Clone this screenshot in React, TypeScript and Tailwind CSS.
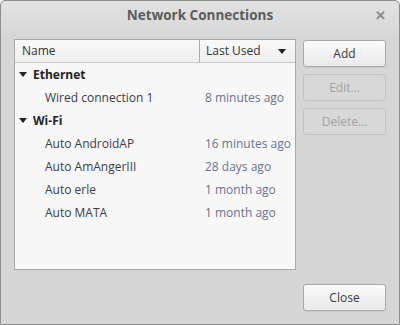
import React from "react";

const rows = [
  { group: "Ethernet", items: [{ name: "Wired connection 1", used: "8 minutes ago" }] },
  {
    group: "Wi-Fi",
    items: [
      { name: "Auto AndroidAP", used: "16 minutes ago" },
      { name: "Auto AmAngerIII", used: "28 days ago" },
      { name: "Auto erle", used: "1 month ago" },
      { name: "Auto MATA", used: "1 month ago" },
    ],
  },
];

const Arrow = () => (
  <svg width="8" height="5" viewBox="0 0 8 5" className="shrink-0">
    <path d="M0 0 H8 L4 5 Z" fill="#222" />
  </svg>
);

const Button = ({ label, disabled }: { label: string; disabled?: boolean }) => (
  <div
    className={
      disabled
        ? "w-[83px] h-[27px] rounded-[3px] border border-[#c2c2c2] bg-[#d8d8d8] text-[#a3a3a3] flex items-center justify-center"
        : "w-[83px] h-[27px] rounded-[3px] border border-[#a8a8a8] bg-gradient-to-b from-[#fbfbfb] to-[#e9e9e9] text-[#3a3a3a] flex items-center justify-center shadow-[0_1px_0_rgba(0,0,0,0.06)]"
    }
  >
    {label}
  </div>
);

export default function App() {
  return (
    <div
      className="w-[400px] h-[325px] border border-[#8d8d8d] rounded-t-[5px] bg-[#d6d6d6] flex flex-col text-[12px]"
      style={{ fontFamily: '"Open Sans", "Noto Sans", sans-serif' }}
    >
      <div className="h-[38px] shrink-0 flex items-start pt-[5px] px-[13px] rounded-t-[5px] bg-gradient-to-b from-[#e2e2e2] to-[#d6d6d6]">
        <div className="w-[14px]" />
        <div className="flex-1 text-center font-bold text-[13.5px] leading-[18px] text-[#5b5b5b]">Network Connections</div>
        <div className="w-[14px] text-[#8a8a8a] font-bold text-[13px] leading-[18px] text-right">✕</div>
      </div>

      <div className="flex px-[13px] gap-[7px] shrink-0">
        <div className="w-[282px] h-[231px] border border-[#a9a9a9] bg-[#f7f7f7] flex flex-col">
          <div className="h-[23px] shrink-0 flex border-b border-[#c6c6c6] bg-gradient-to-b from-[#f8f8f8] to-[#efefef] text-[#333]">
            <div className="w-[185px] border-r border-[#a9a9a9] flex items-center pl-[7px]">Name</div>
            <div className="flex-1 flex items-center pl-[6px] pr-[9px]">
              <span className="flex-1">Last Used</span>
              <Arrow />
            </div>
          </div>
          {rows.map((g) => (
            <React.Fragment key={g.group}>
              <div className="h-[23px] flex items-center pl-[4px] gap-[6px] font-bold text-[#222]">
                <Arrow />
                <span>{g.group}</span>
              </div>
              {g.items.map((it) => (
                <div key={it.name} className="h-[23px] flex items-center">
                  <div className="w-[190px] pl-[30px] text-[#3c3c48]">{it.name}</div>
                  <div className="text-[#6a7290]">{it.used}</div>
                </div>
              ))}
            </React.Fragment>
          ))}
        </div>
        <div className="flex flex-col gap-[7px] pt-[1px]">
          <Button label="Add" />
          <Button label="Edit…" disabled />
          <Button label="Delete…" disabled />
        </div>
      </div>

      <div className="flex justify-end px-[13px] pt-[14px]">
        <Button label="Close" />
      </div>
    </div>
  );
}
